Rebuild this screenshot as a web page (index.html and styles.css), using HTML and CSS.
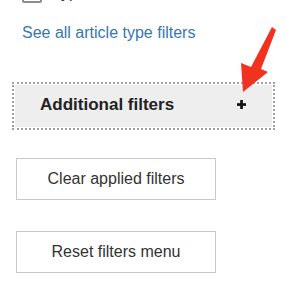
FILE: index.html
```html
<!DOCTYPE html>
<html lang="en">
<head>
<meta charset="utf-8">
<title>Filters</title>
<link rel="stylesheet" href="styles.css">
</head>
<body>
<main class="panel">
  <label class="type-row">
    <span class="checkbox"></span>
    <span class="type-label">Type</span>
  </label>
  <a class="all-link" href="#">See all article type filters</a>
  <button class="additional" type="button">
    <span>Additional filters</span>
    <svg class="plus" width="9" height="9" viewBox="0 0 9 9" aria-hidden="true">
      <rect x="3.2" y="0" width="2.7" height="9" fill="#111"/>
      <rect x="0" y="3.2" width="9" height="2.7" fill="#111"/>
    </svg>
  </button>
  <button class="action" type="button">Clear applied filters</button>
  <button class="action" type="button">Reset filters menu</button>
  <svg class="arrow" width="289" height="300" viewBox="0 0 289 300" aria-hidden="true">
    <path d="M272 27 L276 30 L261 69 L268 72 L243 92 L241 63 L251 67 Z" fill="#f0321f"/>
  </svg>
</main>
</body>
</html>
```

FILE: styles.css
```css
html, body {
  margin: 0;
  padding: 0;
  background: #ffffff;
}

body {
  font-family: "Liberation Sans", Arial, Helvetica, sans-serif;
  color: #333333;
  width: 289px;
  height: 300px;
  overflow: hidden;
}

.panel {
  position: relative;
  display: flex;
  flex-direction: column;
  align-items: flex-start;
  padding-left: 16px;
}

.type-row {
  display: flex;
  align-items: center;
  gap: 10px;
  height: 20px;
  margin-top: -17px;
  margin-left: 6px;
}

.checkbox {
  box-sizing: border-box;
  width: 20px;
  height: 20px;
  border: 2px solid #8c8c8c;
  border-radius: 2px;
  background: #ffffff;
}

.type-label {
  font-size: 16px;
  line-height: 20px;
  color: #333333;
}

.all-link {
  margin-top: 20px;
  margin-left: 6px;
  font-size: 16px;
  line-height: 20px;
  color: #3677b3;
  text-decoration: none;
}

.additional {
  box-sizing: border-box;
  display: flex;
  align-items: center;
  justify-content: space-between;
  width: 257px;
  height: 42px;
  margin-top: 42px;
  margin-left: -1px;
  padding: 0 26px 3px 25px;
  border: none;
  background: #eeeeee;
  outline: 2px dotted #a0a0a0;
  outline-offset: 1px;
  font-family: inherit;
  font-size: 17px;
  font-weight: bold;
  color: #222222;
}

.plus {
  display: block;
}

.action {
  box-sizing: border-box;
  width: 200px;
  height: 42px;
  margin-top: 31px;
  padding: 0;
  border: 1px solid #c9c9c9;
  background: #ffffff;
  font-family: inherit;
  font-size: 16px;
  color: #333333;
}

.arrow {
  position: absolute;
  left: 0;
  top: 0;
  pointer-events: none;
}
```
